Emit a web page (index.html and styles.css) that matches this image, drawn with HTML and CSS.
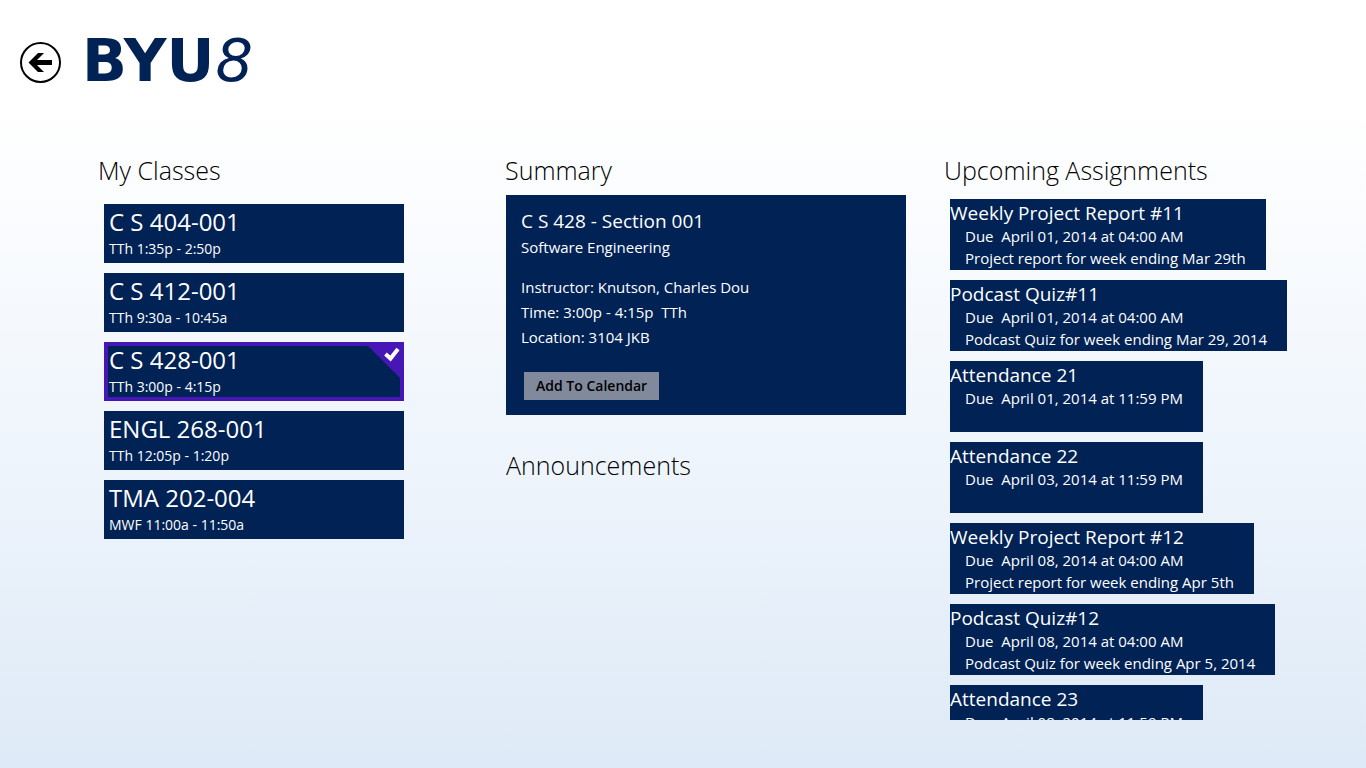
FILE: index.html
```html
<!DOCTYPE html>
<html lang="en">
<head>
<meta charset="utf-8">
<meta name="viewport" content="width=device-width, initial-scale=1">
<title>BYU8</title>
<link rel="stylesheet" href="styles.css">
</head>
<body>
<header class="top">
  <button class="back" type="button" aria-label="Back">
    <svg viewBox="0 0 41 41" aria-hidden="true"><circle cx="20.5" cy="20.5" r="19.5" fill="none" stroke="#000" stroke-width="2"/><path d="M8.500 20.500L18 11h6l-7 7h15v5h-15l7 7h-6z"/></svg>
  </button>
  <h1 class="logo">BYU<span class="logo-eight">8</span></h1>
</header>
<main class="hub">
  <section class="classes">
    <h2 class="heading">My Classes</h2>
    <ul class="class-list">
      <li><button class="tile" type="button"><span class="tile-name">C S 404-001</span><span class="tile-time">TTh 1:35p - 2:50p</span></button></li>
      <li><button class="tile" type="button"><span class="tile-name">C S 412-001</span><span class="tile-time">TTh 9:30a - 10:45a</span></button></li>
      <li><button class="tile tile-selected" type="button" aria-pressed="true"><span class="tile-name">C S 428-001</span><span class="tile-time">TTh 3:00p - 4:15p</span><svg class="tick" viewBox="0 0 40 40" aria-hidden="true"><path d="M0 0h40v40z" fill="#4617b4"/><path d="M21.500 12l5 4.500 7.500-9.500" fill="none" stroke="#fff" stroke-width="4"/></svg></button></li>
      <li><button class="tile" type="button"><span class="tile-name">ENGL 268-001</span><span class="tile-time">TTh 12:05p - 1:20p</span></button></li>
      <li><button class="tile" type="button"><span class="tile-name">TMA 202-004</span><span class="tile-time">MWF 11:00a - 11:50a</span></button></li>
    </ul>
  </section>
  <div class="details">
    <section>
      <h2 class="heading">Summary</h2>
      <div class="summary">
        <h3 class="summary-title">C S 428 - Section 001</h3>
        <p class="summary-course">Software Engineering</p>
        <p class="summary-line">Instructor: Knutson, Charles Dou</p>
        <p class="summary-line">Time: 3:00p - 4:15p&nbsp; TTh</p>
        <p class="summary-line">Location: 3104 JKB</p>
        <button class="add" type="button">Add To Calendar</button>
      </div>
    </section>
    <section class="announcements">
      <h2 class="heading">Announcements</h2>
    </section>
  </div>
  <section class="upcoming">
    <h2 class="heading">Upcoming Assignments</h2>
    <ul class="assignments">
      <li class="task"><h3 class="task-name">Weekly Project Report #11</h3><p class="task-line">Due&nbsp; April 01, 2014 at 04:00 AM</p><p class="task-line">Project report for week ending Mar 29th</p></li>
      <li class="task"><h3 class="task-name">Podcast Quiz#11</h3><p class="task-line">Due&nbsp; April 01, 2014 at 04:00 AM</p><p class="task-line">Podcast Quiz for week ending Mar 29, 2014</p></li>
      <li class="task"><h3 class="task-name">Attendance 21</h3><p class="task-line">Due&nbsp; April 01, 2014 at 11:59 PM</p></li>
      <li class="task"><h3 class="task-name">Attendance 22</h3><p class="task-line">Due&nbsp; April 03, 2014 at 11:59 PM</p></li>
      <li class="task"><h3 class="task-name">Weekly Project Report #12</h3><p class="task-line">Due&nbsp; April 08, 2014 at 04:00 AM</p><p class="task-line">Project report for week ending Apr 5th</p></li>
      <li class="task"><h3 class="task-name">Podcast Quiz#12</h3><p class="task-line">Due&nbsp; April 08, 2014 at 04:00 AM</p><p class="task-line">Podcast Quiz for week ending Apr 5, 2014</p></li>
      <li class="task"><h3 class="task-name">Attendance 23</h3><p class="task-line">Due&nbsp; April 08, 2014 at 11:59 PM</p></li>
    </ul>
  </section>
</main>
</body>
</html>
```
FILE: styles.css
```css
* { box-sizing: border-box; margin: 0; padding: 0; }

body {
  height: 100vh;
  display: flex;
  flex-direction: column;
  overflow: hidden;
  padding-bottom: 48px;
  background: linear-gradient(#fff 0, #fff 14%, #eff5fc 58%, #deeaf7 100%);
  color: #000;
  font-family: "Open Sans", "Noto Sans", sans-serif;
  font-size: 15px;
}

ul { list-style: none; }
button { border: 0; font: inherit; cursor: pointer; }

.top {
  display: flex;
  align-items: center;
  gap: 21px;
  padding: 26px 20px 0;
  height: 98px;
  flex: none;
}
.back { width: 41px; height: 41px; background: none; }
.back svg { display: block; }
.logo {
  padding-bottom: 2px;
  color: #002255;
  font: bold 59px/68px "DejaVu Sans", sans-serif;
}
.logo-eight { margin-left: 1px; font-style: italic; font-weight: 400; }

.hub {
  flex: 1;
  min-height: 0;
  display: grid;
  grid-template-columns: 407fr 439fr 422fr;
  grid-template-rows: minmax(0, 1fr);
  padding: 54px 0 0 98px;
}
.heading { font-size: 25px; font-weight: 300; line-height: 36px; }

.class-list {
  display: grid;
  gap: 10px;
  padding: 16px 0 0 6px;
}
.tile {
  position: relative;
  display: block;
  width: 300px;
  height: 59px;
  padding: 3px 5px 2px;
  background: #002255;
  color: #fff;
  text-align: left;
}
.tile-selected { box-shadow: inset 0 0 0 4px #4617b4; }
.tile-name { display: block; font-size: 24px; line-height: 30px; }
.tile-time { display: block; font-size: 14px; line-height: 24px; }
.tick { position: absolute; top: 0; right: 0; width: 40px; height: 40px; }

.summary {
  width: 400px;
  margin: 7px 0 0 1px;
  padding: 13px 15px 15px;
  background: #002255;
  color: #fff;
}
.summary-title { font-size: 19px; font-weight: 400; line-height: 26px; }
.summary-course { line-height: 26px; margin-bottom: 15px; }
.summary-line { line-height: 25px; }
.add {
  margin: 22px 0 0 3px;
  padding: 0 12px;
  background: #808a9c;
  color: #000;
  font-size: 14px;
  font-weight: 600;
  line-height: 28px;
}
.announcements { padding: 32px 0 0 1px; }

.upcoming { display: flex; flex-direction: column; min-height: 0; }
.assignments {
  flex: 1;
  min-height: 0;
  overflow: hidden;
  display: flex;
  flex-direction: column;
  align-items: flex-start;
  gap: 10px;
  margin: 11px 0 0 6px;
}
.task {
  flex: none;
  height: 71px;
  padding: 3px 20px 0 0;
  background: #002255;
  color: #fff;
  white-space: nowrap;
}
.task-name { font-size: 19px; font-weight: 400; line-height: 23px; }
.task-line { padding-left: 15px; line-height: 22px; }
```
